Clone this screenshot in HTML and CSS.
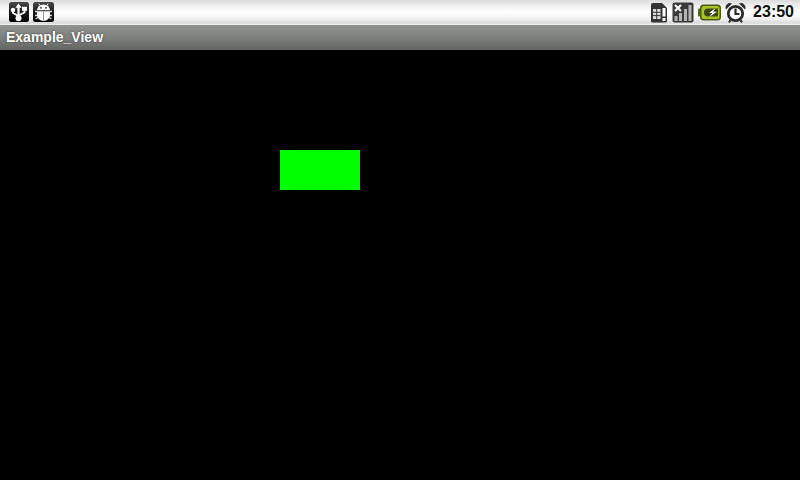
FILE: index.html
```html
<!DOCTYPE html>
<html lang="en">
<head>
<meta charset="UTF-8">
<meta name="viewport" content="width=device-width, initial-scale=1.0">
<title>Example_View</title>
<link rel="stylesheet" href="styles.css">
</head>
<body>

  <div class="status-bar">
    <div class="notify-icons">
      <!-- USB -->
      <svg class="icon" width="20" height="20" viewBox="0 0 20 20">
        <defs>
          <linearGradient id="tile" x1="0" y1="0" x2="0" y2="1">
            <stop offset="0" stop-color="#4a4a4a"/>
            <stop offset="0.5" stop-color="#1c1c1c"/>
            <stop offset="1" stop-color="#000"/>
          </linearGradient>
        </defs>
        <rect width="20" height="20" rx="2.500" fill="url(#tile)"/>
        <path d="M9.500 4v13" stroke="#fff" stroke-width="2.200" fill="none"/>
        <path d="M9.500 1.500l3.200 4.200h-6.400z" fill="#fff"/>
        <circle cx="9.500" cy="16.200" r="3" fill="#fff"/>
        <path d="M4 9v2l5.500 3M15.500 8v2.500l-6 3" stroke="#fff" stroke-width="1.800" fill="none"/>
        <circle cx="4" cy="8" r="2.300" fill="#fff"/>
        <rect x="13" y="4.800" width="5" height="4" fill="#fff"/>
      </svg>
      <!-- debug -->
      <svg class="icon" width="21" height="20" viewBox="0 0 21 20">
        <rect width="21" height="20" rx="2.500" fill="url(#tile)"/>
        <path d="M4 8.300a6.500 5.800 0 0 1 13 0z" fill="#fff"/>
        <path d="M7 3.500L5.800 1.500M14 3.500L15.200 1.500" stroke="#fff" stroke-width="1"/>
        <path d="M4 9.300h13v4a6.500 5.700 0 0 1-13 0z" fill="#fff"/>
        <path d="M10.500 9.300v9.400" stroke="#666" stroke-width="0.700"/>
        <path d="M2 9.500h2M19 9.500h-2M2 13.500h2M19 13.500h-2M2.500 17l2.500-1.500M18.500 17l-2.500-1.500" stroke="#ddd" stroke-width="1.300"/>
        <circle cx="8" cy="5.800" r="0.900" fill="#222"/>
        <circle cx="13" cy="5.800" r="0.900" fill="#222"/>
      </svg>
    </div>
    <div class="system-icons">
      <!-- sim card missing -->
      <svg class="icon" width="18" height="21" viewBox="0 0 18 21">
        <path d="M1 3a2 2 0 0 1 2-2h9l5 5v13a1.500 1.500 0 0 1-1.500 1.500h-13a1.500 1.500 0 0 1-1.500-1.500z" fill="#333"/>
        <rect x="3" y="7" width="7.500" height="10" fill="#ddd"/>
        <path d="M3 10.300h7.500M3 13.600h7.500M6.700 7v10" stroke="#333" stroke-width="1"/>
        <rect x="12.500" y="6" width="3" height="8.500" fill="#fff"/>
        <rect x="12.500" y="16" width="3" height="3" fill="#fff"/>
      </svg>
      <!-- signal, no service -->
      <svg class="icon" width="22" height="21" viewBox="0 0 22 21">
        <rect x="0.500" y="0.500" width="21" height="20" rx="2" fill="#3a3a3a"/>
        <rect x="2.500" y="14" width="3" height="5" fill="#b4b4b4"/>
        <rect x="7" y="11" width="3" height="8" fill="#b4b4b4"/>
        <rect x="12" y="7" width="3" height="12" fill="#b4b4b4"/>
        <rect x="16.500" y="3" width="3" height="16" fill="#b4b4b4"/>
        <path d="M3 3l6 6M9 3l-6 6" stroke="#fff" stroke-width="2"/>
      </svg>
      <!-- battery charging -->
      <svg class="icon" width="23" height="19" viewBox="0 0 23 19">
        <rect x="0" y="5.500" width="3" height="8" rx="1" fill="#55661a"/>
        <rect x="2" y="1.500" width="21" height="16" rx="3.500" fill="#4a5a16"/>
        <rect x="3.500" y="3" width="18" height="13" rx="2.500" fill="#a4c423"/>
        <path d="M10 5.500h10v8h-10a4 4 0 0 1 0-8z" fill="#3a4712"/>
        <path d="M17.500 5l-6.500 5h3.200l-3 4 7.800-5.200h-3.800z" fill="#fff"/>
      </svg>
      <!-- alarm -->
      <svg class="icon" width="21" height="21" viewBox="0 0 21 21">
        <path d="M1 7.500a4.500 4.500 0 0 1 6-6zM20 7.500a4.500 4.500 0 0 0-6-6z" fill="#2a2a2a"/>
        <path d="M5.500 18l-1.500 2.500M15.500 18l1.500 2.500" stroke="#2a2a2a" stroke-width="2"/>
        <circle cx="10.500" cy="11.500" r="7.200" fill="#fff" stroke="#2a2a2a" stroke-width="2.800"/>
        <path d="M10.500 6.500v5.500h4" stroke="#2a2a2a" stroke-width="2.200" fill="none"/>
      </svg>
      <span class="clock">23:50</span>
    </div>
  </div>

  <div class="title-bar">Example_View</div>

  <div class="content">
    <div class="green-box"></div>
  </div>

</body>
</html>
```

FILE: styles.css
```css
html, body {
  margin: 0;
  height: 100%;
}

body {
  width: 800px;
  height: 480px;
  overflow: hidden;
  display: flex;
  flex-direction: column;
  background-color: #000;
  font-family: "Liberation Sans", Arial, sans-serif;
}

.status-bar {
  height: 25px;
  box-sizing: border-box;
  padding: 0 6px 1px 9px;
  display: flex;
  justify-content: space-between;
  align-items: center;
  background: linear-gradient(to bottom, #dcdcdc 0%, #f4f4f4 30%, #ffffff 50%, #f2f2f2 75%, #dadada 92%, #f4f4f4 100%);
}

.notify-icons {
  display: flex;
  gap: 4px;
}

.system-icons {
  display: flex;
  align-items: center;
  gap: 4px;
}

.icon {
  display: block;
}

.clock {
  margin-left: 3px;
  font-size: 16px;
  font-weight: bold;
  color: #111;
}

.title-bar {
  height: 25px;
  box-sizing: border-box;
  padding: 0 0 2px 6px;
  display: flex;
  align-items: center;
  background: linear-gradient(to bottom, #929492 0%, #7e807e 50%, #636563 100%);
  color: #fff;
  font-size: 14px;
  font-weight: bold;
  text-shadow: 0 0 2px #333;
}

.content {
  flex: 1;
  background-color: #000;
}

.green-box {
  width: 80px;
  height: 40px;
  margin: 100px 0 0 280px;
  background-color: #00ff00;
}
```
